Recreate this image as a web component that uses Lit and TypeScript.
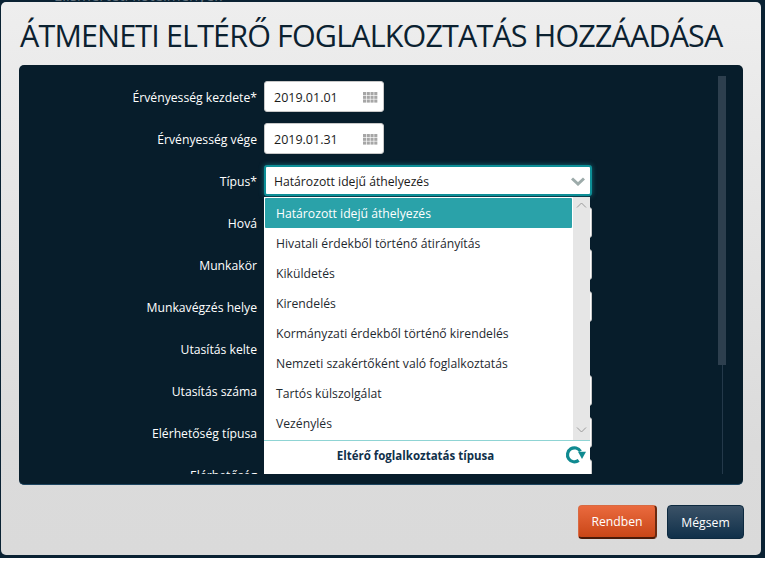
import { LitElement, html, css, svg } from "lit";
import { customElement } from "lit/decorators.js";

type Row = { label: string; kind: "date" | "wide" | "select"; value?: string };

const ROWS: Row[] = [
  { label: "Érvényesség kezdete*", kind: "date", value: "2019.01.01" },
  { label: "Érvényesség vége", kind: "date", value: "2019.01.31" },
  { label: "Típus*", kind: "select", value: "Határozott idejű áthelyezés" },
  { label: "Hová", kind: "wide" },
  { label: "Munkakör", kind: "wide" },
  { label: "Munkavégzés helye", kind: "wide" },
  { label: "Utasítás kelte", kind: "date" },
  { label: "Utasítás száma", kind: "wide" },
  { label: "Elérhetőség típusa", kind: "wide" },
  { label: "Elérhetőség", kind: "wide" },
];

const OPTIONS = [
  "Határozott idejű áthelyezés",
  "Hivatali érdekből történő átirányítás",
  "Kiküldetés",
  "Kirendelés",
  "Kormányzati érdekből történő kirendelés",
  "Nemzeti szakértőként való foglalkoztatás",
  "Tartós külszolgálat",
  "Vezénylés",
];

const gridIcon = () => {
  const cells = [];
  for (let r = 0; r < 3; r++)
    for (let c = 0; c < 4; c++)
      cells.push(svg`<rect x=${c * 3.75} y=${r * 3.75} width="3.1" height="3.1"></rect>`);
  return html`<svg class="cal" width="15" height="11" viewBox="0 0 15 11" fill="#a6a6a6">${cells}</svg>`;
};

@customElement("app-root")
export class AppRoot extends LitElement {
  static styles = css`
    :host {
      display: block;
      width: 765px;
      height: 561px;
      position: relative;
      overflow: hidden;
      background: #fff;
      font-family: "Open Sans", "Noto Sans", sans-serif;
    }
    .backdrop {
      height: 557.5px;
      background: #0a2233;
      position: relative;
      overflow: hidden;
      box-sizing: border-box;
      padding: 2px 0 0 1px;
    }
    .ghost {
      position: absolute;
      color: #5f6f7b;
      font-size: 15px;
      white-space: nowrap;
    }
    .ghost.top { left: 54px; top: -15px; }
    .ghost.bottom { left: 255px; top: 553px; }
    .modal {
      position: relative;
      width: 760px;
      height: 553px;
      box-sizing: border-box;
      border-radius: 5px;
      background: linear-gradient(#eeeeee, #e9e9e9 20%, #dbdbdb 80%, #dadada);
      display: flex;
      flex-direction: column;
      padding: 0 18px;
    }
    h1 {
      margin: 0;
      height: 63px;
      box-sizing: border-box;
      padding: 13px 0 0 1px;
      font-size: 30.5px;
      line-height: 41px;
      font-weight: 400;
      color: #0b2130;
      white-space: nowrap;
      letter-spacing: -0.85px;
    }
    .panel {
      position: relative;
      height: 420px;
      width: 724px;
      box-sizing: border-box;
      background: #071d2b;
      border-radius: 5px;
      border-bottom: 1px solid #1d4560;
      padding: 11px 0 10px;
    }
    .scroller {
      height: 398px;
      overflow: hidden;
      padding-top: 5px;
      box-sizing: border-box;
      display: flex;
      flex-direction: column;
      gap: 11px;
    }
    .row {
      display: grid;
      grid-template-columns: 238px auto;
      column-gap: 7px;
      align-items: center;
      justify-content: start;
      height: 31px;
      flex: none;
    }
    label {
      text-align: right;
      color: #fff;
      font-size: 12.2px;
      padding-top: 2px;
    }
    .field {
      height: 31px;
      box-sizing: border-box;
      background: #fff;
      border: 1px solid #c8c8c8;
      border-radius: 3px;
      display: flex;
      align-items: center;
      justify-content: space-between;
      font-size: 12.5px;
      color: #1a1a1a;
      padding: 1px 5px 0 9px;
    }
    .field.date { width: 120px; }
    .field.wide { width: 328px; }
    .field.select {
      width: 328px;
      border: 2px solid #0d8f97;
      padding: 1px 5px 0 8px;
      font-size: 12.2px;
      box-shadow: 0 0 5px rgba(30, 170, 180, 0.55);
    }
    .track {
      position: absolute;
      left: 702.5px;
      top: 11px;
      width: 1px;
      height: 398px;
      background: #24394a;
    }
    .thumb {
      position: absolute;
      left: 699px;
      top: 11px;
      width: 8px;
      height: 289px;
      background: #2d3f4e;
    }
    .dropdown {
      position: absolute;
      left: 245px;
      top: 132px;
      width: 326px;
      height: 277px;
      background: #fff;
      display: flex;
      flex-direction: column;
    }
    .list {
      height: 243px;
      flex: none;
      display: flex;
      border-bottom: 1px solid #8fd4d4;
    }
    .options {
      flex: 1;
      padding: 1px 1px 0 1px;
      min-width: 0;
    }
    .opt {
      height: 30px;
      line-height: 32px;
      padding-left: 11px;
      font-size: 12.2px;
      color: #1f2a30;
      white-space: nowrap;
    }
    .opt.sel {
      background: #2aa2a9;
      color: #fff;
      border-radius: 1px;
    }
    .bar {
      width: 17px;
      flex: none;
      background: #e6e6e6;
      display: flex;
      flex-direction: column;
      justify-content: space-between;
      align-items: center;
      padding: 5px 0 7px;
      box-sizing: border-box;
    }
    .foot {
      flex: 1;
      position: relative;
      display: flex;
      align-items: center;
      justify-content: center;
      padding-right: 23px;
      padding-bottom: 5px;
      font-size: 11.5px;
      font-weight: 700;
      color: #10304a;
    }
    .refresh { position: absolute; right: 4px; top: 3px; }
    .actions {
      flex: 1;
      display: flex;
      justify-content: flex-end;
      align-items: flex-start;
      gap: 10px;
      padding-top: 20px;
      margin-right: -1px;
    }
    button {
      height: 34px;
      box-sizing: border-box;
      font: 500 12.2px "Open Sans", sans-serif;
      color: #fff;
      border-radius: 4px;
      padding: 0;
    }
    .ok {
      width: 79px;
      background: linear-gradient(#ea6a3e, #c94617);
      border: 1px solid #d96a42;
      border-bottom: 2px solid #4a1a08;
      border-right: 2px solid #6b2a10;
    }
    .cancel {
      width: 77px;
      background: linear-gradient(#3b5267, #10304a);
      border: 1px solid #0d2a40;
    }
  `;

  private field(r: Row) {
    if (r.kind === "date")
      return html`<div class="field date"><span>${r.value ?? ""}</span>${gridIcon()}</div>`;
    if (r.kind === "select")
      return html`<div class="field select">
        <span>${r.value}</span>
        <svg width="14" height="9" viewBox="0 0 14 9" fill="none" stroke="#9dabaa" stroke-width="3"><path d="M1 1.5l6 5.5 6-5.5"></path></svg>
      </div>`;
    return html`<div class="field wide"></div>`;
  }

  render() {
    return html`
      <div class="backdrop">
        <div class="ghost top">Elismerteti kötelmények</div>
        <div class="ghost bottom">ESZ</div>
        <section class="modal">
          <h1>ÁTMENETI ELTÉRŐ FOGLALKOZTATÁS HOZZÁADÁSA</h1>
          <div class="panel">
            <div class="scroller">
              ${ROWS.map((r) => html`<div class="row"><label>${r.label}</label>${this.field(r)}</div>`)}
            </div>
            <div class="track"></div>
            <div class="thumb"></div>
            <div class="dropdown">
              <div class="list">
                <div class="options">
                  ${OPTIONS.map((o, i) => html`<div class="opt ${i === 0 ? "sel" : ""}">${o}</div>`)}
                </div>
                <div class="bar">
                  <svg width="11" height="6" viewBox="0 0 11 6" fill="none" stroke="#9a9a9a"><path d="M1 5.5l4.5-4.5 4.5 4.5"></path></svg>
                  <svg width="11" height="6" viewBox="0 0 11 6" fill="none" stroke="#9a9a9a"><path d="M1 .5l4.5 4.5 4.5-4.5"></path></svg>
                </div>
              </div>
              <div class="foot">
                Eltérő foglalkoztatás típusa
                <svg class="refresh" width="21" height="20" viewBox="0 0 21 20">
                  <path d="M15.5 7.2A7 7 0 1 0 13.7 16.4" fill="none" stroke="#0f8a90" stroke-width="3.2"></path>
                  <path d="M13 7.7H21L17 15Z" fill="#0f8a90"></path>
                </svg>
              </div>
            </div>
          </div>
          <div class="actions">
            <button class="ok">Rendben</button>
            <button class="cancel">Mégsem</button>
          </div>
        </section>
      </div>
    `;
  }
}
